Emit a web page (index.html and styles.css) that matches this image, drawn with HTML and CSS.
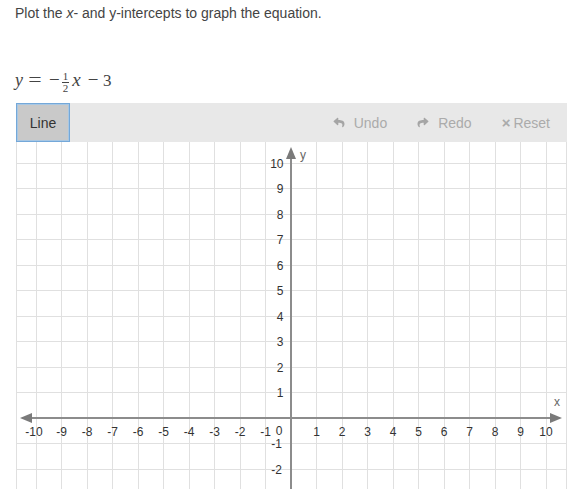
FILE: index.html
```html
<!DOCTYPE html>
<html lang="en">
<head>
<meta charset="utf-8">
<title>Graph the equation</title>
<link rel="stylesheet" href="styles.css">
</head>
<body>
<p class="prompt">Plot the <i>x</i>- and y-intercepts to graph the equation.</p>
<div class="equation">
  <span class="mi y">y</span><span class="mo eq">=</span><span class="mo minus">−</span><span class="frac"><span class="num">1</span><span class="bar"></span><span class="den">2</span></span><span class="mi x">x</span><span class="mo minus2">−</span><span class="mn">3</span>
</div>
<div class="toolbar">
  <button class="btn-line">Line</button>
  <div class="actions">
    <span class="action undo"><svg class="ico" viewBox="0 0 512 512"><path d="M8.3 189.8L184.3 37.9C199.7 24.5 224 35.3 224 56v80.1c160.6 1.8 288 34 288 186.3 0 61.4-39.6 122.3-83.3 154.1-13.7 9.9-33.1-2.5-28.1-18.6 45.3-145-21.5-183.5-176.6-185.7V360c0 20.7-24.3 31.5-39.7 18.2l-176-152c-11.1-9.6-11.1-26.8 0-36.4z"/></svg>Undo</span>
    <span class="action redo"><svg class="ico" viewBox="0 0 512 512"><path d="M503.7 189.8L327.7 37.9C312.3 24.5 288 35.3 288 56v80.1C127.4 137.9 0 170.1 0 322.3c0 61.4 39.6 122.3 83.3 154.1 13.7 9.9 33.1-2.5 28.1-18.6C66.1 312.8 132.9 274.3 288 272.1V360c0 20.7 24.3 31.5 39.7 18.2l176-152c11.1-9.6 11.1-26.8 0-36.4z"/></svg>Redo</span>
    <span class="action reset"><span class="times">×</span><span>Reset</span></span>
  </div>
</div>
<div class="graph">
<svg class="plane" width="551" height="347" viewBox="0 0 551 347">
  <g class="grid">
    <line x1="20" y1="0" x2="20" y2="347"/>
    <line x1="45.5" y1="0" x2="45.5" y2="347"/>
    <line x1="71" y1="0" x2="71" y2="347"/>
    <line x1="96.5" y1="0" x2="96.5" y2="347"/>
    <line x1="122" y1="0" x2="122" y2="347"/>
    <line x1="147.5" y1="0" x2="147.5" y2="347"/>
    <line x1="173" y1="0" x2="173" y2="347"/>
    <line x1="198.5" y1="0" x2="198.5" y2="347"/>
    <line x1="224" y1="0" x2="224" y2="347"/>
    <line x1="249.5" y1="0" x2="249.5" y2="347"/>
    <line x1="300.5" y1="0" x2="300.5" y2="347"/>
    <line x1="326" y1="0" x2="326" y2="347"/>
    <line x1="351.5" y1="0" x2="351.5" y2="347"/>
    <line x1="377" y1="0" x2="377" y2="347"/>
    <line x1="402.5" y1="0" x2="402.5" y2="347"/>
    <line x1="428" y1="0" x2="428" y2="347"/>
    <line x1="453.5" y1="0" x2="453.5" y2="347"/>
    <line x1="479" y1="0" x2="479" y2="347"/>
    <line x1="504.5" y1="0" x2="504.5" y2="347"/>
    <line x1="530" y1="0" x2="530" y2="347"/>
    <line x1="0" y1="21" x2="551" y2="21"/>
    <line x1="0" y1="46.5" x2="551" y2="46.5"/>
    <line x1="0" y1="72" x2="551" y2="72"/>
    <line x1="0" y1="97.5" x2="551" y2="97.5"/>
    <line x1="0" y1="123" x2="551" y2="123"/>
    <line x1="0" y1="148.5" x2="551" y2="148.5"/>
    <line x1="0" y1="174" x2="551" y2="174"/>
    <line x1="0" y1="199.5" x2="551" y2="199.5"/>
    <line x1="0" y1="225" x2="551" y2="225"/>
    <line x1="0" y1="250.5" x2="551" y2="250.5"/>
    <line x1="0" y1="301.5" x2="551" y2="301.5"/>
    <line x1="0" y1="327" x2="551" y2="327"/>
    <line x1="0.5" y1="0" x2="0.5" y2="347"/>
    <line x1="550.5" y1="0" x2="550.5" y2="347"/>
  </g>
  <g class="axes">
    <line x1="12" y1="276" x2="538" y2="276"/>
    <line x1="275" y1="13" x2="275" y2="347"/>
  </g>
  <g class="arrows">
    <polygon points="4,276 16,271 16,281"/>
    <polygon points="546,276 534,271 534,281"/>
    <polygon points="275,5 270,17 280,17"/>
  </g>
  <g class="xlabels">
    <text x="18" y="294">-10</text>
    <text x="45.5" y="294">-9</text>
    <text x="71" y="294">-8</text>
    <text x="96.5" y="294">-7</text>
    <text x="122" y="294">-6</text>
    <text x="147.5" y="294">-5</text>
    <text x="173" y="294">-4</text>
    <text x="198.5" y="294">-3</text>
    <text x="224" y="294">-2</text>
    <text x="249.5" y="294">-1</text>
    <text x="263" y="293">0</text>
    <text x="300.5" y="294">1</text>
    <text x="326" y="294">2</text>
    <text x="351.5" y="294">3</text>
    <text x="377" y="294">4</text>
    <text x="402.5" y="294">5</text>
    <text x="428" y="294">6</text>
    <text x="453.5" y="294">7</text>
    <text x="479" y="294">8</text>
    <text x="504.5" y="294">9</text>
    <text x="530" y="294">10</text>
  </g>
  <g class="ylabels">
    <text x="267.5" y="25.5">10</text>
    <text x="267.5" y="51">9</text>
    <text x="267.5" y="76.5">8</text>
    <text x="267.5" y="102">7</text>
    <text x="267.5" y="127.5">6</text>
    <text x="267.5" y="153">5</text>
    <text x="267.5" y="178.5">4</text>
    <text x="267.5" y="204">3</text>
    <text x="267.5" y="229.5">2</text>
    <text x="267.5" y="255">1</text>
    <text x="266" y="306">-1</text>
    <text x="266" y="331.5">-2</text>
  </g>
  <text class="axis-name" x="541" y="264">x</text>
  <text class="axis-name" x="287" y="17">y</text>
</svg>
</div>
</body>
</html>
```
FILE: styles.css
```css
html, body {
  margin: 0;
  padding: 0;
  overflow: hidden;
  background: #fff;
}
body {
  font-family: "Liberation Sans", Arial, sans-serif;
  color: #444;
}
.prompt {
  margin: 5px 0 0 15px;
  font-size: 14px;
  line-height: 16px;
  color: #444;
}
.equation {
  margin: 44px 0 0 15px;
  height: 30px;
  line-height: 30px;
  font-family: "Liberation Serif", "Times New Roman", serif;
  font-size: 17px;
  color: #444;
  white-space: nowrap;
}
.equation .mi {
  font-style: italic;
  display: inline-block;
}
.equation .y { width: 8px; font-size: 18px; }
.equation .x { margin-left: 2px; width: 11px; text-align: center; font-size: 19px; }
.equation .mo {
  display: inline-block;
  text-align: center;
  font-size: 19px;
}
.equation .eq { margin-left: 5px; width: 14px; transform: scaleX(1.25); }
.equation .minus { margin-left: 7px; width: 10px; }
.equation .minus2 { margin-left: 5px; width: 12px; }
.equation .mn { display: inline-block; margin-left: 4px; font-size: 17px; }
.equation .frac {
  display: inline-flex;
  flex-direction: column;
  align-items: center;
  vertical-align: 6px;
  margin-left: 3px;
  width: 7px;
  font-size: 11px;
  line-height: 9px;
}
.equation .frac .bar {
  width: 7px;
  height: 1px;
  background: #444;
  margin: 1px 0 1px;
}
.toolbar {
  margin: 8px 0 0 16px;
  width: 551px;
  height: 39px;
  background: #e8e8e8;
  display: flex;
  align-items: stretch;
}
.btn-line {
  width: 54px;
  box-sizing: border-box;
  border: 1px solid #74a8d9;
  box-shadow: inset 0 0 0 1px #a8c7e3;
  background: #c9c9c9;
  font-family: "Liberation Sans", Arial, sans-serif;
  font-size: 14px;
  color: #333;
  padding: 0;
  margin: 0;
}
.actions {
  margin-left: auto;
  display: flex;
  align-items: center;
  gap: 30px;
  padding-right: 17px;
}
.action {
  display: flex;
  align-items: center;
  font-size: 14px;
  color: #ababab;
}
.ico {
  width: 12px;
  height: 11px;
  fill: #a5a5a5;
  margin-right: 9px;
}
.times {
  font-size: 15px;
  font-weight: bold;
  margin-right: 3px;
}
.graph {
  margin-left: 16px;
  width: 551px;
  height: 347px;
}
.plane {
  display: block;
}
.grid line {
  stroke: #e0e0e0;
  stroke-width: 1;
  shape-rendering: crispEdges;
}
.axes line {
  stroke: #8c8c8c;
  stroke-width: 2;
}
.arrows polygon {
  fill: #7a7a7a;
}
.xlabels text {
  font-family: "Liberation Sans", Arial, sans-serif;
  font-size: 12px;
  fill: #333;
  text-anchor: middle;
}
.ylabels text {
  font-family: "Liberation Sans", Arial, sans-serif;
  font-size: 12px;
  fill: #333;
  text-anchor: end;
}
.axis-name {
  font-family: "Liberation Sans", Arial, sans-serif;
  font-size: 12px;
  fill: #666;
  text-anchor: middle;
}
```
